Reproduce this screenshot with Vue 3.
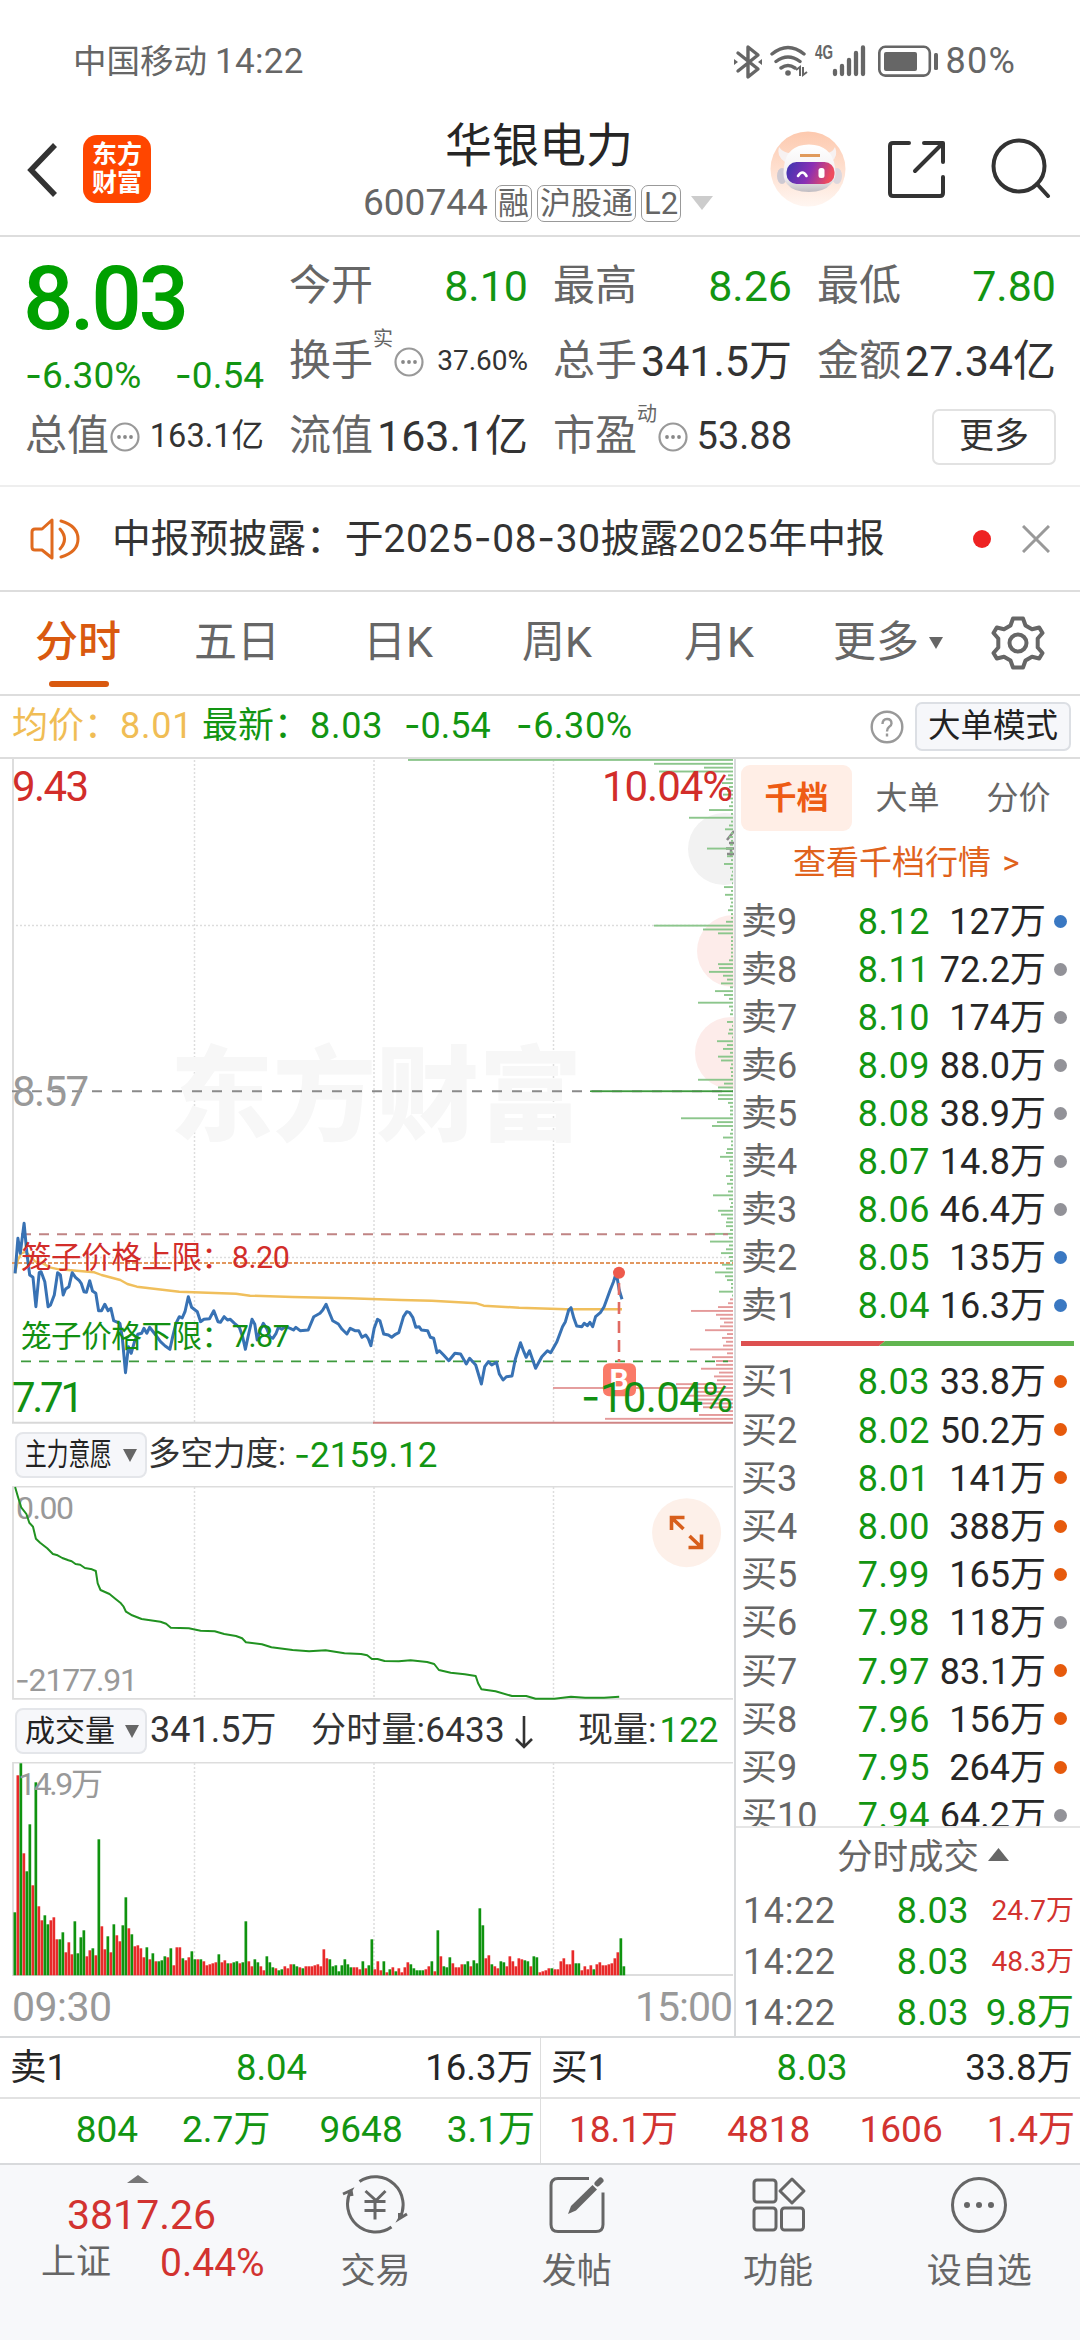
<template>
  <div class="page">
    <!-- 状态栏 -->
    <div class="status-bar">
      <span class="carrier">中国移动</span>
      <span class="clock">14:22</span>
      <svg class="status-icons" viewBox="728 40 212 44" fill="none" stroke="#666">
        <path d="M736 53l20 16-10 8V47l10 8-20 16" stroke-width="3.4" stroke-linejoin="round" stroke-linecap="round" />
        <path d="M732 59l4 3-4 3zM760 59l-4 3 4 3z" fill="#666" stroke="none" />
        <path d="M770 54q16-13 32 0M774 61.500q12-9 24 0M779 68q7-5 14 0" stroke-width="3.400" stroke-linecap="round" />
        <circle cx="786" cy="73" r="2.800" fill="#666" stroke="none" />
        <path d="M794 70l4-3v9M801 67v8l4-3" stroke-width="2" />
        <text x="813" y="59" class="net" textLength="18" lengthAdjust="spacingAndGlyphs">4G</text>
        <path d="M833 71v3M840 66v8M847 60v14M854 53v21M861 47.500v26.500" stroke-width="4.300" stroke-linecap="round" />
        <rect x="877.300" y="46.800" width="50.500" height="28.800" rx="6" stroke-width="2.600" />
        <rect x="882" y="52" width="33" height="19" rx="2" fill="#666" stroke="none" />
        <rect x="932" y="53" width="4" height="17" rx="1.500" fill="#666" stroke="none" />
      </svg>
      <span class="percent">80%</span>
    </div>

    <!-- 标题栏 -->
    <div class="header">
      <svg class="back" viewBox="0 0 40 60" fill="none"><path d="M33 5L9 30l24 25" stroke="#333" stroke-width="5.500" /></svg>
      <div class="logo"><span>东方</span><span>财富</span></div>
      <div class="title-box">
        <div class="title">华银电力</div>
        <div class="sub">
          <span class="code">600744</span>
          <span class="badge">融</span>
          <span class="badge">沪股通</span>
          <span class="badge">L2</span>
          <svg class="sub-arrow" viewBox="0 0 22 14"><path d="M0 0h22L11 14z" fill="#ccc" /></svg>
        </div>
      </div>
      <svg class="robot" viewBox="0 0 76 76">
        <defs>
          <linearGradient id="halo" x1="0" y1="0" x2="0" y2="1">
            <stop offset="0" stop-color="#fdc9ae" /><stop offset="1" stop-color="#fff6f1" />
          </linearGradient>
          <linearGradient id="visor" x1="0" y1="0" x2="1" y2="0.200">
            <stop offset="0" stop-color="#3a36b0" /><stop offset="0.550" stop-color="#8a2fb4" /><stop offset="1" stop-color="#ee4c5e" />
          </linearGradient>
          <linearGradient id="shell" x1="0" y1="0" x2="0" y2="1">
            <stop offset="0" stop-color="#fff" /><stop offset="0.700" stop-color="#f1eef0" /><stop offset="1" stop-color="#c0bcc2" />
          </linearGradient>
        </defs>
        <circle cx="38" cy="38" r="37.500" fill="url(#halo)" />
        <path d="M9 16q-3 9 6 15l8-9q-9 1-14-6zM65 16q4 9-4 15l-7-9q8 1 11-6z" fill="#f7f1f1" />
        <ellipse cx="12" cy="45" rx="5" ry="8" fill="#cdc9d2" />
        <ellipse cx="67" cy="45" rx="5" ry="8" fill="#dcd7dd" />
        <path d="M14 36Q16 14 39 13.500 62 14 65 36q2 12-4 17-7 8-22 8-16 0-22-8-5-6-3-17z" fill="url(#shell)" />
        <path d="M30 24.500h20" stroke="#e09a5c" stroke-width="3" fill="none" />
        <rect x="16.500" y="31" width="48" height="22" rx="10" fill="url(#visor)" />
        <path d="M28 45q4.500-7 8.500 0" stroke="#fff" stroke-width="2.600" fill="none" stroke-linecap="round" />
        <rect x="48.500" y="37" width="6" height="10" rx="2.500" fill="#fff" />
      </svg>
      <svg class="share" viewBox="0 0 60 60" fill="none" stroke="#333" stroke-width="4" stroke-linecap="round" stroke-linejoin="round">
        <path d="M22 4H6q-3 0-3 3v47q0 3 3 3h47q3 0 3-3V38M37 4h19v19M55 5L28 32" />
      </svg>
      <svg class="search" viewBox="0 0 60 60" fill="none" stroke="#333" stroke-width="4" stroke-linecap="round">
        <circle cx="28" cy="28" r="25.500" /><path d="M46 46l11 12" />
      </svg>
    </div>

    <!-- 行情 -->
    <div class="quote">
      <div class="quote-left">
        <div class="price">8.03</div>
        <div class="change"><span><s>-</s>6.30%</span><span><s>-</s>0.54</span></div>
        <div class="cell"><span class="label">总值</span><DotIcon class="dots" /><span class="val mid">163.1亿</span></div>
      </div>
      <div class="quote-grid">
        <div v-for="c in cells" :key="c.label" class="cell">
          <span class="label">{{ c.label }}</span>
          <span v-if="c.sup" class="sup">{{ c.sup }}</span>
          <DotIcon v-if="c.sup" class="dots" />
          <span class="val" :class="c.cls">{{ c.value }}</span>
        </div>
        <div class="cell end"><button class="more-btn">更多</button></div>
      </div>
    </div>

    <!-- 公告 -->
    <div class="notice">
      <svg class="horn" viewBox="0 0 50 42" fill="none" stroke="#e06a1e" stroke-width="3" stroke-linejoin="round" stroke-linecap="round">
        <path d="M22 2v38L12 32H5q-3 0-3-3V14q0-3 3-3h7z" />
        <path d="M30 11q9 10 0 20M31 3q17 5 17 18T31 39" />
      </svg>
      <span class="notice-text">中报预披露：于<i>2025<s>-</s>08<s>-</s>30</i>披露<i>2025</i>年中报</span>
      <span class="red-dot"></span>
      <svg class="close" viewBox="0 0 28 28"><path d="M1 1l26 26M27 1L1 27" stroke="#999" stroke-width="3" /></svg>
    </div>

    <!-- 周期切换 -->
    <div class="tabs">
      <span v-for="(t, i) in tabs" :key="t" class="tab" :class="{ active: i === 0 }">{{ t }}</span>
      <span class="tab">更多<svg class="tab-arrow" viewBox="0 0 14 12"><path d="M0 0h14L7 12z" fill="#666" /></svg></span>
      <svg class="gear" viewBox="-27 -27 54 54" fill="none" stroke="#666" stroke-width="4" stroke-linejoin="round">
        <path d="M-5-24.500h10L7.500-17.500l6.500 3.800 7.200-1.800 3.300 5.500-4.800 5.500v9l4.800 5.500-3.300 5.500-7.200-1.800-6.500 3.800L5 24.500H-5L-7.500 17.500-14 13.700l-7.200 1.800-3.300-5.500 4.800-5.500v-9l-4.800-5.500 3.300-5.500 7.200 1.800 6.500-3.800z" />
        <circle r="8.500" />
      </svg>
    </div>

    <div class="info">
      <span class="avg">均价：<b>8.01</b></span>
      <span class="latest">最新：<b>8.03</b></span>
      <span class="latest d1"><s>-</s>0.54</span>
      <span class="latest d2"><s>-</s>6.30%</span>
      <svg class="help" viewBox="0 0 34 34" fill="none" stroke="#999" stroke-width="2.400">
        <circle cx="17" cy="17" r="15.300" />
        <path d="M12.500 14q0-5 4.500-5t4.500 4.500q0 2-2.500 3.500-2 1.500-2 4.500M17 23.500v3" />
      </svg>
      <button class="mode-btn">大单模式</button>
    </div>

    <!-- 图表与盘口 -->
    <div class="main">
      <div class="charts">
        <svg class="chart-price" viewBox="0 759 734 665">
          <g class="grid">
            <path d="M194.500 760V1422M374 760V1422M553.500 760V1422M12 925.500H733M12 1257.500H733" />
          </g>
          <text x="170" y="1133" class="watermark" textLength="412">东方财富</text>
          <circle cx="724" cy="849" r="36" fill="#f2f2f2" />
          <circle cx="733" cy="951" r="36" fill="#fdecea" />
          <circle cx="731" cy="1053" r="36" fill="#fdecea" />
          <path d="M727 840l7-9M729 843h5M726 848.500h8M727 854l7 0M731 849v8" stroke="#888" stroke-width="2.500" />
          <g>
            <rect
              v-for="(w, i) in depth"
              :key="i"
              :x="733 - w"
              :y="759 + i * 3.853"
              :width="w"
              height="1.900"
              :fill="i < 140 ? '#8cc68c' : '#e49a9a'"
            />
          </g>
          <path d="M13 759V1423" stroke="#ddd" stroke-width="2" />
          <path d="M12 1422.700H374" stroke="#d8d8d8" stroke-width="2" />
          <path d="M373 1422.700H733" stroke="#cf8686" stroke-width="2" />
          <path d="M12 1091.300H733" stroke="#8a8a8a" stroke-width="2" stroke-dasharray="10 10" />
          <path d="M590 1091.300H733" stroke="#3f9a3f" stroke-width="1.500" />
          <path d="M21 1234.300H728" stroke="#c08484" stroke-width="2" stroke-dasharray="10 8" />
          <path d="M12 1263H733" stroke="#e2975f" stroke-width="2" stroke-dasharray="4 2" />
          <path d="M21 1361.400H728" stroke="#3d9a3d" stroke-width="1.600" stroke-dasharray="10 8" />
          <polyline :points="toPoints(avgLine, 1090)" fill="none" stroke="#f0bf5c" stroke-width="2.400" stroke-linejoin="round" />
          <polyline :points="toPoints(priceLine, 1090)" fill="none" stroke="#3872b4" stroke-width="3" stroke-linejoin="round" />
          <path d="M619 1283V1362" stroke="#e06a62" stroke-width="2.600" stroke-dasharray="12 7" />
          <circle cx="619" cy="1272.700" r="6" fill="#ee5a4c" />
          <rect x="603" y="1363.300" width="33" height="33" rx="6" fill="#fa7a68" />
          <text x="609.500" y="1390" class="mark-b">B</text>
          <g class="axis">
            <text x="12" y="801" fill="#d22d2a" textLength="77">9.43</text>
            <text x="602" y="801" fill="#d22d2a" textLength="131">10.04%</text>
            <text x="12" y="1105.500" fill="#999" textLength="77">8.57</text>
            <text x="12" y="1411.600" fill="#129012" textLength="72">7.71</text>
            <text x="581" y="1411.600" fill="#129012" textLength="152"><tspan class="dash">-</tspan>10.04%</text>
          </g>
          <text x="21" y="1267.500" class="cage" fill="#d22d2a" textLength="269">笼子价格上限：8.20</text>
          <text x="21" y="1347.300" class="cage" fill="#129012" textLength="269">笼子价格下限：7.87</text>
        </svg>

        <div class="sub-head">
          <button class="pill"><span class="squeeze">主力意愿</span><svg class="pill-arrow" viewBox="0 0 14 13"><path d="M0 0h14L7 13z" fill="#666" /></svg></button>
          <span class="h-label">多空力度:</span>
          <span class="h-green"><s>-</s>2159.12</span>
        </div>
        <svg class="chart-force" viewBox="0 1486 734 214">
          <g class="grid"><path d="M194.500 1487V1698M374 1487V1698M553.500 1487V1698" /></g>
          <path d="M733 1486.500H13V1698.800H733" fill="none" stroke="#ddd" stroke-width="1.800" />
          <g class="axis small" fill="#999">
            <text x="16" y="1518.700" textLength="58">0.00</text>
            <text x="15" y="1690.700" textLength="123"><tspan class="dash">-</tspan>2177.91</text>
          </g>
          <polyline :points="toPoints(forceLine, 1420)" fill="none" stroke="#219221" stroke-width="2" stroke-linejoin="round" />
          <circle cx="686.600" cy="1532.700" r="34.500" fill="#fdf0e9" />
          <path d="M671.500 1530V1517.500H684.500M673 1519L683.500 1529M701.500 1534.500V1547.500H688.500M700 1546L689.500 1536" fill="none" stroke="#d85f1c" stroke-width="3.600" />
        </svg>

        <div class="sub-head">
          <button class="pill">成交量<svg class="pill-arrow" viewBox="0 0 14 13"><path d="M0 0h14L7 13z" fill="#666" /></svg></button>
          <span class="v-total">341.5万</span>
          <span class="v-minute">分时量:6433</span>
          <svg class="down" viewBox="0 0 20 34" fill="none" stroke="#333" stroke-width="2.600"><path d="M10 0v31M2 23l8 8 8-8" /></svg>
          <span class="v-now">现量:<em>122</em></span>
        </div>
        <svg class="chart-vol" viewBox="0 1762 734 275">
          <g class="grid"><path d="M194.500 1763V1975M374 1763V1975M553.500 1763V1975" /></g>
          <path d="M733 1762.700H13V1975H733" fill="none" stroke="#ddd" stroke-width="1.800" />
          <rect
            v-for="(b, i) in volume"
            :key="i"
            :x="13.500 + i * 3"
            :y="1975.300 - b.h"
            width="2.700"
            :height="b.h"
            :fill="b.up ? '#e82a2a' : '#0f930f'"
          />
          <text x="18" y="1795" class="axis small" fill="#999" textLength="85">14.9万</text>
          <g class="axis time" fill="#999">
            <text x="12" y="2020.600" textLength="100">09:30</text>
            <text x="635" y="2020.600" textLength="98">15:00</text>
          </g>
        </svg>
      </div>

      <div class="book">
        <div class="book-tabs">
          <span class="book-tab on">千档</span>
          <span class="book-tab">大单</span>
          <span class="book-tab">分价</span>
        </div>
        <div class="book-link">查看千档行情 &gt;</div>
        <div class="levels">
          <div v-for="r in sells" :key="r[0]" class="level">
            <span class="lv-name">{{ r[0] }}</span><span class="lv-price">{{ r[1] }}</span><span class="lv-vol">{{ r[2] }}</span><i class="dot" :class="r[3]"></i>
          </div>
        </div>
        <svg class="ratio" viewBox="0 0 333 5"><path d="M0 0h144l-6 5H0z" fill="#dd5050" /><path d="M144 0h189v5H138z" fill="#62b550" /></svg>
        <div class="levels buys">
          <div v-for="r in buys" :key="r[0]" class="level">
            <span class="lv-name">{{ r[0] }}</span><span class="lv-price">{{ r[1] }}</span><span class="lv-vol">{{ r[2] }}</span><i class="dot" :class="r[3]"></i>
          </div>
        </div>
        <div class="deal-head">分时成交<svg class="deal-arrow" viewBox="0 0 21 13"><path d="M0 13h21L10.500 0z" fill="#666" /></svg></div>
        <div v-for="(d, i) in deals" :key="i" class="deal">
          <span class="deal-time">14:22</span><span class="deal-price">8.03</span><span class="deal-vol" :class="d.cls">{{ d.vol }}</span>
        </div>
      </div>
    </div>

    <!-- 买卖一档 -->
    <div class="best">
      <div v-for="b in best" :key="b.name" class="best-col">
        <div class="best-row"><span>{{ b.name }}</span><span class="best-price">{{ b.price }}</span><span class="best-vol">{{ b.vol }}</span></div>
        <div class="queue" :class="b.cls"><span v-for="q in b.queue" :key="q">{{ q }}</span></div>
      </div>
    </div>

    <!-- 底部导航 -->
    <div class="nav">
      <div class="index">
        <svg class="index-arrow" viewBox="0 0 22 8"><path d="M0 8h22L11 0z" fill="#777" /></svg>
        <div class="index-num">3817.26</div>
        <div class="index-row"><span>上证</span><span class="index-pct">0.44%</span></div>
      </div>
      <div class="nav-item">
        <svg viewBox="-33 -30 66 60" fill="none" stroke="#666" stroke-width="3">
          <path d="M-15.500-23.500A28 28 0 0 1 24.500 13.500L32 9M16.500 22A28 28 0 0 1-24-14.500L-32-11M-24-15l1 6M24.500 14l0-6" />
          <path d="M-9.500-14L1-4.500 10.500-14M-10.500-3.500H10.500M-10.500 5.500H10.500M0-4V14.500" />
        </svg>
        <span>交易</span>
      </div>
      <div class="nav-item">
        <svg viewBox="-33 -30 66 60" fill="none" stroke="#666" stroke-width="3">
          <path d="M12-26.500h-31q-7 0-7 7v39q0 7 7 7h38q7 0 7-7v-32" />
          <path d="M-9 9l3-8L15.500-20l4.500 4.500L-1 5.500z" fill="#666" stroke="none" />
          <path d="M20.500-21.500l3-3" stroke-width="6" stroke-linecap="round" />
        </svg>
        <span>发帖</span>
      </div>
      <div class="nav-item">
        <svg viewBox="-33 -30 66 60" fill="none" stroke="#666" stroke-width="3" stroke-linejoin="round">
          <rect x="-24" y="-25" width="22" height="22" rx="3" />
          <path d="M14-26L26-14 14-2 2-14z" />
          <rect x="-24" y="3" width="22" height="22" rx="3" />
          <rect x="3.500" y="3" width="22" height="22" rx="3" />
        </svg>
        <span>功能</span>
      </div>
      <div class="nav-item last">
        <svg viewBox="-33 -30 66 60" fill="none" stroke="#666" stroke-width="3">
          <circle r="26.500" />
          <g fill="#666" stroke="none"><circle cx="-12" r="3" /><circle r="3" /><circle cx="12" r="3" /></g>
        </svg>
        <span>设自选</span>
      </div>
    </div>
  </div>
</template>

<script setup>
import { h } from 'vue'

// 圆圈省略号图标
const DotIcon = () =>
  h('svg', { viewBox: '0 0 30 30' }, [
    h('circle', { cx: 15, cy: 15, r: 13.5, fill: 'none', stroke: '#999', 'stroke-width': 2.2 }),
    ...[9, 15, 21].map((cx) => h('circle', { cx, cy: 15, r: 1.9, fill: '#888' }))
  ])

const cells = [
  { label: '今开', value: '8.10', cls: 'green' },
  { label: '最高', value: '8.26', cls: 'green' },
  { label: '最低', value: '7.80', cls: 'green' },
  { label: '换手', sup: '实', value: '37.60%', cls: 'tiny' },
  { label: '总手', value: '341.5万' },
  { label: '金额', value: '27.34亿' },
  { label: '流值', value: '163.1亿' },
  { label: '市盈', sup: '动', value: '53.88', cls: 'pe' }
]

const tabs = ['分时', '五日', '日K', '周K', '月K']

const sells = [
  ['卖9', '8.12', '127万', 'blue'],
  ['卖8', '8.11', '72.2万', 'gray'],
  ['卖7', '8.10', '174万', 'gray'],
  ['卖6', '8.09', '88.0万', 'gray'],
  ['卖5', '8.08', '38.9万', 'gray'],
  ['卖4', '8.07', '14.8万', 'gray'],
  ['卖3', '8.06', '46.4万', 'gray'],
  ['卖2', '8.05', '135万', 'blue'],
  ['卖1', '8.04', '16.3万', 'blue']
]

const buys = [
  ['买1', '8.03', '33.8万', 'orange'],
  ['买2', '8.02', '50.2万', 'orange'],
  ['买3', '8.01', '141万', 'orange'],
  ['买4', '8.00', '388万', 'orange'],
  ['买5', '7.99', '165万', 'orange'],
  ['买6', '7.98', '118万', 'gray'],
  ['买7', '7.97', '83.1万', 'orange'],
  ['买8', '7.96', '156万', 'orange'],
  ['买9', '7.95', '264万', 'orange'],
  ['买10', '7.94', '64.2万', 'gray']
]

const deals = [
  { vol: '24.7万', cls: 'red' },
  { vol: '48.3万', cls: 'red' },
  { vol: '9.8万', cls: 'big' }
]

const best = [
  { name: '卖1', price: '8.04', vol: '16.3万', cls: 'green', queue: ['804', '2.7万', '9648', '3.1万'] },
  { name: '买1', price: '8.03', vol: '33.8万', cls: 'red', queue: ['18.1万', '4818', '1606', '1.4万'] }
]

// 折线数据 -> svg points
const toPoints = (line, top) =>
  line
    .trim()
    .split(/\s+/)
    .map((p) => {
      const [x, y] = p.split(',')
      return (x / 2.119).toFixed(1) + ',' + (top + y / 3).toFixed(1)
    })
    .join(' ')

const priceLine = `32,550 38,445 43,490 51,400 57,490 63,555 70,562 76,650 83,548 87,545 95,575 102,650 107,645 115,615
122,548 128,555 134,615 139,597 146,590 153,548 160,562 168,572 172,580 178,605 183,607 190,572 196,603 203,610
209,662 215,662 222,643 229,662 235,655 241,692 254,700 259,740 266,848 272,770 278,790 285,755 292,733 300,730
305,715 311,730 317,712 330,735 340,755 350,768 360,778 366,740 373,700 380,680 386,684 392,665 399,620 406,652
418,665 425,695 432,688 444,686 453,662 462,695 467,697 475,680 482,690 488,688 497,700 507,712 514,740 520,778
526,738 534,688 540,703 545,750 551,722 558,700 565,715 572,740 578,745 585,730 590,712 597,718 605,710 615,715
622,720 627,712 636,722 653,720 665,680 678,670 684,660 691,643 698,668 705,692 717,702 725,718 735,732 742,715
752,722 760,722 767,742 775,735 780,745 786,767 793,715 800,688 805,692 813,732 823,735 830,742 838,733 845,728
855,680 862,665 868,668 875,683 881,712 888,710 893,720 906,722 912,742 919,745 926,788 931,782 940,795 951,812
964,790 976,792 988,822 995,805 1008,825 1020,882 1027,830 1035,815 1042,825 1052,817 1058,852 1066,870 1073,860
1085,858 1092,808 1103,758 1110,785 1115,802 1122,782 1135,835 1148,800 1160,782 1167,788 1180,755 1192,710
1198,695 1205,660 1210,653 1216,685 1222,708 1233,710 1238,700 1245,707 1250,697 1256,710 1262,680 1272,668
1280,650 1293,600 1300,575 1306,548 1312,600 1318,628`

const avgLine = `32,550 38,510 45,490 55,485 65,500 75,515 90,520 105,532 125,538 150,541 200,547 215,555 255,570 270,582
290,590 380,605 500,611 530,617 620,621 740,625 850,630 915,632 1010,640 1025,647 1100,653 1200,658 1318,658`

const forceLine = `32,201 38,230 45,262 56,282 62,308 70,320 76,356 85,368 100,385 112,402 122,406 132,414 145,421 152,424
160,432 170,434 180,444 195,448 203,453 207,490 213,510 232,522 245,537 255,548 262,560 267,575 280,586 300,597
340,605 352,611 362,623 400,625 425,632 455,634 475,642 500,648 513,655 521,667 555,673 575,682 620,690 655,694
690,691 730,700 765,702 778,706 788,717 800,717 815,723 845,724 870,721 905,726 920,732 930,750 955,758 985,763
1008,768 1013,790 1020,808 1050,814 1085,828 1115,828 1135,836 1175,836 1210,830 1240,833 1280,833 1312,830`

// 右侧挂单量
const depth = [
  325, 79, 29, 74, 5, 7, 11, 4, 6, 10, 4, 2, 4, 24, 2, 44, 2, 4, 8, 2, 4, 2, 3, 26, 3, 6, 2, 9, 3, 1, 2, 3, 1, 9, 2, 8,
  3, 2, 3, 5, 2, 2, 7, 79, 30, 15, 2, 2, 2, 2, 2, 2, 4, 15, 14, 24, 10, 6, 12, 3, 18, 9, 4, 35, 4, 2, 3, 0, 6, 1, 4, 5,
  1, 16, 6, 10, 3, 15, 12, 2, 3, 2, 2, 35, 9, 15, 142, 15, 15, 5, 3, 3, 3, 52, 16, 21, 2, 3, 10, 2, 2, 6, 7, 13, 4, 3,
  3, 3, 7, 3, 6, 2, 5, 20, 4, 2, 3, 15, 12, 6, 7, 7, 3, 24, 4, 23, 4, 7, 12, 4, 3, 11, 7, 18, 8, 6, 2, 2, 14, 1, 3, 5,
  15, 42, 17, 13, 9, 13, 28, 6, 11, 7, 10, 43, 6, 21, 17, 17, 32, 14, 19, 16, 57, 180, 37, 46, 37, 39, 30, 11, 34, 128
]

// 分时成交量 r 涨 g 跌
const volume = `g63 r200 g212 r122 g104 g151 r90 g193 r69 r55 g60 g51 r55 r58 r36 g36 g43 r23 r33 r21 g54 g22 g38 g45 r19
r25 g27 r20 g136 r49 r26 g39 r23 g51 r40 r34 g50 g78 r47 g41 r29 r30 r27 r18 g28 r16 g22 r14 g14 g15 g19 r18 g27 r10
r28 r28 g17 r15 r18 g24 g16 r16 g16 r14 r10 r11 r12 r13 g21 r13 r15 g12 r12 g13 g14 r12 g13 g54 r14 r9 g16 g13 r9 r5
g19 g13 g8 r7 g5 g6 r9 r7 r11 g11 g9 r8 g7 r9 r9 r9 r10 r11 r9 r26 r17 g16 g9 g10 g4 g10 g16 g11 g8 r8 r8 r6 g14 r7
g10 g36 r6 r14 r5 g14 r3 g6 r8 g4 r7 r3 r8 r13 g11 g7 g5 g5 g5 r6 r9 g14 r4 g45 r19 g9 g8 g18 r12 r8 r8 r11 g11 g14
r9 g15 g12 g67 g50 r17 r20 g11 r9 r7 g14 g13 r9 r19 r14 r9 r17 r16 g15 g14 r9 g19 g18 r3 r4 r5 r7 g7 r6 r6 r14 r17
r11 r11 r25 g12 g12 r5 r9 r6 r10 g6 r11 r13 r10 r10 r11 r12 r17 r23 g37 g9`
  .split(/\s+/)
  .map((s) => ({ up: s[0] === 'r', h: +s.slice(1) }))
</script>

<style>
body {
  background: #fff;
}
</style>

<style scoped>
.page {
  width: 1080px;
  height: 2340px;
  overflow: hidden;
  background: #fff;
  color: #333;
  font-family: Roboto, "Noto Sans CJK SC", sans-serif;
  line-height: 1.150;
  white-space: nowrap;
  display: flex;
  flex-direction: column;
}

.page > div {
  box-sizing: border-box;
  flex: none;
}

svg {
  display: block;
  flex: none;
}

button {
  font-family: inherit;
  padding: 0;
  box-sizing: border-box;
}

/* 负号用更宽的字形 */
s,
.dash {
  font-family: Inter, sans-serif;
  text-decoration: none;
}

.green {
  color: #129512;
}

.red {
  color: #d23330;
}

/* 状态栏 */
.status-bar {
  height: 122px;
  display: flex;
  align-items: center;
  color: #666;
  font-size: 33.500px;
  padding: 2px 64px 0 73px;
}

.clock {
  font-size: 35px;
  margin-left: 8px;
  letter-spacing: 0.300px;
}

.status-icons {
  width: 212px;
  height: 44px;
  margin-left: auto;
}

.net {
  font: bold 20px "Liberation Sans", sans-serif;
  fill: #666;
  stroke: none;
}

.percent {
  font-size: 36px;
  letter-spacing: 1.200px;
  margin-left: 4px;
}

/* 标题栏 */
.header {
  height: 115px;
  display: flex;
  align-items: flex-start;
  border-bottom: 2px solid #ddd;
}

.back {
  width: 40px;
  height: 60px;
  margin: 18px 0 0 22px;
}

.logo {
  width: 68px;
  height: 68px;
  box-sizing: border-box;
  border-radius: 14px;
  background: #ff4600;
  color: #fff;
  font-size: 25px;
  font-weight: 700;
  line-height: 28px;
  padding-top: 6px;
  margin: 13px 0 0 21px;
  display: flex;
  flex-direction: column;
  align-items: center;
}

.title-box {
  width: 400px;
  margin-left: 190px;
}

.title {
  font-size: 47px;
  line-height: 48px;
  color: #262626;
  margin-left: 104px;
}

.sub {
  display: flex;
  align-items: center;
  height: 38px;
  margin-top: 14px;
  color: #666;
  padding-left: 22px;
}

.code {
  font-size: 37px;
  width: 132px;
}

.badge {
  height: 37px;
  box-sizing: border-box;
  border: 1.500px solid #999;
  border-radius: 7px;
  font-size: 31px;
  line-height: 35px;
  padding: 0 2px;
  margin-right: 5px;
}

.sub-arrow {
  width: 22px;
  height: 14px;
  margin-left: 5px;
}

.robot {
  width: 76px;
  height: 76px;
  margin: 9px 0 0 29px;
}

.share {
  width: 60px;
  height: 60px;
  margin: 17px 0 0 41px;
}

.search {
  width: 60px;
  height: 60px;
  margin: 16px 0 0 44px;
}

/* 行情 */
.quote {
  height: 250px;
  padding: 12px 24px 0 25px;
  display: flex;
  border-bottom: 2px solid #eee;
}

.quote-left {
  width: 239px;
  margin-right: 25px;
}

.price {
  height: 97px;
  line-height: 99px;
  font-size: 89px;
  font-weight: 500;
  color: #00a000;
  letter-spacing: -3.500px;
  margin-left: -2px;
}

.change {
  height: 53px;
  line-height: 57px;
  display: flex;
  justify-content: space-between;
  font-size: 37px;
  color: #129512;
}

.quote-grid {
  display: grid;
  grid-template-columns: repeat(3, 239px);
  grid-auto-rows: 75px;
  column-gap: 25px;
}

.cell {
  height: 75px;
  display: flex;
  align-items: center;
}

.label {
  font-size: 42px;
  color: #666;
}

.val {
  font-size: 43px;
  color: #333;
  margin-left: auto;
}

.val.green {
  color: #129512;
}

.val.mid {
  font-size: 32.500px;
}

.val.tiny {
  font-size: 28px;
}

.val.pe {
  font-size: 38px;
}

.sup {
  font-size: 20px;
  color: #666;
  align-self: flex-start;
  margin-top: 4px;
}

.dots {
  width: 30px;
  height: 30px;
  margin-left: 1px;
}

.cell.end {
  justify-content: flex-end;
}

.more-btn {
  width: 124px;
  height: 56px;
  border: 2px solid #e2e2e2;
  border-radius: 7px;
  background: #fff;
  font-size: 35px;
  color: #333;
  line-height: 52px;
}

/* 公告 */
.notice {
  height: 105px;
  display: flex;
  align-items: center;
  padding: 0 30px 0 30px;
  border-bottom: 2px solid #ddd;
}

.horn {
  width: 50px;
  height: 42px;
}

.notice-text {
  font-size: 38.800px;
  margin-left: 32px;
}

.notice-text i {
  font-style: normal;
  letter-spacing: 0.700px;
}

.red-dot {
  width: 18px;
  height: 18px;
  border-radius: 50%;
  background: #ee2222;
  margin-left: auto;
}

.close {
  width: 28px;
  height: 28px;
  margin-left: 31px;
}

/* 周期 */
.tabs {
  height: 104px;
  display: flex;
  align-items: center;
  border-bottom: 2px solid #ddd;
  font-size: 43px;
  color: #666;
  padding-left: 35px;
}

.tab {
  position: relative;
  width: 159px;
  display: flex;
  align-items: center;
}

.tab:nth-child(2) {
  width: 169px;
}

.tab:nth-child(3) {
  width: 159px;
}

.tab:nth-child(4) {
  width: 162px;
}

.tab:nth-child(5),
.tab:nth-child(6) {
  width: 149px;
}

.tab.active {
  color: #d9590f;
  font-weight: 500;
}

.tab.active::after {
  content: "";
  position: absolute;
  left: 14px;
  bottom: -19px;
  width: 60px;
  height: 6px;
  border-radius: 3px;
  background: #d9590f;
}

.tab-arrow {
  width: 14px;
  height: 12px;
  margin-left: 10px;
}

.gear {
  width: 54px;
  height: 54px;
  margin-left: 9px;
}

.info {
  height: 63px;
  display: flex;
  align-items: center;
  font-size: 36px;
  padding: 0 9px 0 12px;
  border-bottom: 2px solid #ddd;
}

.info b {
  font-weight: 400;
  letter-spacing: 0.800px;
}

.avg {
  color: #f0bd55;
  width: 190px;
}

.latest {
  color: #129512;
  width: 202px;
}

.d1 {
  width: 112px;
}

.d2 {
  width: auto;
  letter-spacing: 0.600px;
}

.help {
  width: 34px;
  height: 34px;
  margin-left: auto;
}

.mode-btn {
  width: 156px;
  height: 49px;
  margin-left: 11px;
  border: 2px solid #dcdfe4;
  border-radius: 7px;
  background: #f6f7fa;
  font-size: 32.500px;
  line-height: 45px;
  color: #222;
}

/* 图表 */
.main {
  height: 1279px;
  display: flex;
  border-bottom: 2px solid #d8dadc;
}

.charts {
  width: 736px;
  box-sizing: border-box;
  border-right: 2px solid #d8dadc;
}

.chart-price {
  width: 734px;
  height: 665px;
}

.chart-force {
  width: 734px;
  height: 214px;
}

.chart-vol {
  width: 734px;
  height: 275px;
}

.grid path {
  stroke: #ddd;
  stroke-width: 1.500px;
  stroke-dasharray: 2 2;
}

.watermark {
  font-size: 103px;
  font-weight: 900;
  fill: #f7f7f7;
}

.axis {
  font-size: 42px;
}

.axis.small {
  font-size: 32px;
}

.axis.time {
  font-size: 41px;
}

.cage {
  font-size: 30.500px;
}

.mark-b {
  font-size: 30px;
  font-weight: 700;
  fill: #fff;
}

.sub-head {
  height: 62px;
  display: flex;
  align-items: center;
  font-size: 35px;
  color: #333;
  padding-left: 15px;
}

.pill {
  width: 132px;
  height: 46px;
  border: 2px solid #e4e6ea;
  border-radius: 8px;
  background: #f6f7fa;
  font-size: 30px;
  line-height: 42px;
  color: #222;
  display: flex;
  align-items: center;
  padding-left: 8px;
  flex: none;
}

.squeeze {
  width: 88px;
  font-size: 31px;
  transform: scaleX(0.700);
  transform-origin: 0 50%;
}

.pill-arrow {
  width: 14px;
  height: 13px;
  margin-left: 10px;
}

.h-label {
  font-size: 32.500px;
  margin-left: 1px;
  width: 146px;
}

.h-green {
  color: #129512;
}

.v-total {
  font-size: 36px;
  margin-left: 3px;
  width: 161px;
}

.v-minute {
  width: 200px;
  letter-spacing: 0.200px;
}

.down {
  width: 20px;
  height: 34px;
  margin: 4px 0 0 3px;
}

.v-now {
  margin-left: 44px;
}

.v-now em {
  font-style: normal;
  color: #129512;
  margin-left: 3px;
}

/* 盘口 */
.book {
  width: 344px;
  overflow: hidden;
}

.book-tabs {
  display: flex;
  padding: 6px 0 0 5px;
}

.book-tab {
  width: 111px;
  height: 66px;
  line-height: 67px;
  border-radius: 9px;
  text-align: center;
  font-size: 32px;
  color: #666;
}

.book-tab.on {
  background: #ffeee6;
  color: #ee5c14;
  font-weight: 700;
}

.book-link {
  height: 60px;
  line-height: 63px;
  padding-left: 57px;
  font-size: 33px;
  word-spacing: 3px;
  color: #e0621c;
}

.levels {
  padding-top: 8px;
}

.level {
  height: 48px;
  display: flex;
  align-items: center;
  font-size: 36px;
}

.lv-name {
  width: 80px;
  padding-left: 5px;
  color: #666;
}

.lv-price {
  width: 109px;
  text-align: right;
  color: #129512;
  letter-spacing: 0.500px;
}

.lv-vol {
  width: 116px;
  text-align: right;
  color: #262626;
}

.dot {
  width: 13px;
  height: 13px;
  border-radius: 50%;
  margin: -3px 0 0 8px;
}

.dot.blue {
  background: #3a78c2;
}

.dot.gray {
  background: #929298;
}

.dot.orange {
  background: #e65a0c;
}

.ratio {
  width: 333px;
  height: 5px;
  margin: 10px 0 0 5px;
}

.buys {
  height: 482px;
  box-sizing: border-box;
  padding-top: 13px;
  overflow: hidden;
  border-bottom: 2px solid #e6e6e6;
}

.buys .level {
  height: 48.200px;
}

.deal-head {
  height: 58px;
  display: flex;
  align-items: center;
  padding-left: 101px;
  font-size: 35.500px;
  color: #666;
}

.deal-arrow {
  width: 21px;
  height: 13px;
  margin: -6px 0 0 9px;
}

.deal {
  height: 51px;
  display: flex;
  align-items: center;
  font-size: 36px;
}

.deal-time {
  width: 120px;
  padding-left: 7px;
  letter-spacing: 0.600px;
  color: #666;
}

.deal-price {
  width: 106px;
  text-align: right;
  color: #129512;
  letter-spacing: 0.500px;
}

.deal-vol {
  width: 105px;
  text-align: right;
  font-size: 28px;
}

.deal-vol.big {
  font-size: 37px;
  color: #129512;
}

/* 买一卖一 */
.best {
  height: 127px;
  display: flex;
  border-bottom: 2px solid #d8dadc;
}

.best-col {
  width: 540px;
  box-sizing: border-box;
}

.best-col + .best-col {
  border-left: 1.500px solid #ddd;
}

.best-row {
  height: 61px;
  box-sizing: border-box;
  display: grid;
  grid-template-columns: 1fr 1fr 1fr;
  align-items: center;
  padding: 0 7px 0 10px;
  border-bottom: 2px solid #e2e2e2;
  font-size: 36.500px;
  color: #262626;
}

.best-price {
  text-align: center;
  color: #129512;
}

.best-vol {
  text-align: right;
}

.queue {
  height: 62px;
  display: flex;
  align-items: center;
  justify-content: flex-end;
  font-size: 37px;
  padding-right: 5px;
}

.queue span {
  width: 132.300px;
  text-align: right;
}

/* 底部导航 */
.nav {
  height: 176px;
  background: #f7f8fa;
  display: flex;
  color: #666;
  font-size: 35px;
}

.index {
  width: 275px;
}

.index-arrow {
  width: 22px;
  height: 8px;
  margin: 10px 0 0 127px;
}

.index-num {
  font-size: 41px;
  line-height: 48px;
  margin: 8px 0 0 67px;
  color: #d23330;
}

.index-row {
  display: flex;
  align-items: center;
  height: 48px;
  padding-left: 41px;
}

.index-pct {
  font-size: 39px;
  color: #d23330;
  margin-left: 49px;
}

.nav-item {
  width: 201.500px;
  display: flex;
  flex-direction: column;
  align-items: center;
}

.nav-item svg {
  width: 66px;
  height: 60px;
  margin-top: 10px;
}

.nav-item span {
  line-height: 48px;
  margin-top: 13px;
}
</style>
